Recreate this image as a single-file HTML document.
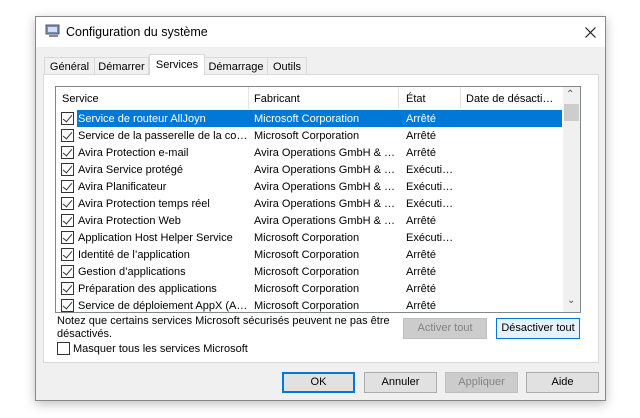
<!DOCTYPE html><html><head><meta charset="utf-8"><style>
*{margin:0;padding:0;box-sizing:border-box}
body{width:640px;height:418px;background:#fff;font-family:"Liberation Sans",sans-serif;font-size:11px;color:#000;position:relative;overflow:hidden}
.a{position:absolute}
.win{left:35px;top:16px;width:571px;height:385px;border:1px solid #888;background:#f0f0f0;box-shadow:0 3px 10px rgba(0,0,0,.25)}
.title{left:0;top:0;width:569px;height:30px;background:#fff}
.tab{top:40px;height:18px;border:1px solid #d9d9d9;border-bottom:none;background:#f0f0f0;padding-top:3px;text-align:center;white-space:nowrap}
.panel{left:7px;top:57px;width:556px;height:289px;background:#fff;border:1px solid #d9d9d9}
.list{left:19px;top:69px;width:526px;height:227px;border:1px solid #828790;background:#fff;overflow:hidden}
.row{position:absolute;left:0;height:17px;width:506px;line-height:19px;white-space:nowrap}
.cb{position:absolute;left:5px;top:2px;width:13px;height:13px;border:1px solid #333;background:#fff}
.cb:after{content:"";position:absolute;left:3px;top:0px;width:4px;height:8px;border:solid #333;border-width:0 1.3px 1.3px 0;transform:rotate(40deg)}
.c1{position:absolute;left:22px}.c2{position:absolute;left:198px}.c3{position:absolute;left:350px}
.sel{position:absolute;left:21px;top:0;width:485px;height:17px;background:#0078d7}
.btn{height:21px;border:1px solid #adadad;background:#e1e1e1;text-align:center;line-height:19px}
</style></head><body>
<div class="a win">
 <div class="a title">
  <svg class="a" style="left:9px;top:6px" width="16" height="16" viewBox="0 0 16 16"><rect x="1" y="2" width="13" height="9" fill="#7a8fb0" stroke="#556"/><rect x="3" y="4" width="9" height="5" fill="#cfe0f5"/><rect x="4" y="12" width="9" height="2" fill="#889"/></svg>
  <div class="a" style="left:30px;top:8px;font-size:12.5px">Configuration du système</div>
  <svg class="a" style="left:549px;top:10px" width="11" height="11" viewBox="0 0 11 11"><path d="M0.5 0.5L10.5 10.5M10.5 0.5L0.5 10.5" stroke="#111" stroke-width="1.1"/></svg>
 </div>
 <div class="a tab" style="left:8px;width:51px">Général</div>
 <div class="a tab" style="left:58px;width:55px">Démarrer</div>
 <div class="a tab" style="left:168px;width:64px">Démarrage</div>
 <div class="a tab" style="left:231px;width:40px">Outils</div>
 <div class="a panel"></div>
 <div class="a tab" style="left:113px;width:56px;top:37px;height:21px;background:#fff;padding-top:4px;z-index:2">Services</div>
 <div class="a list">
  <div class="a" style="left:0;top:0;width:506px;height:22px;line-height:24px">
   <span class="a" style="left:6px">Service</span><span class="a" style="left:198px">Fabricant</span><span class="a" style="left:350px">État</span><span class="a" style="left:410px">Date de désacti…</span>
   <div class="a" style="left:192px;top:0;width:1px;height:22px;background:#e5e5e5"></div>
   <div class="a" style="left:342px;top:0;width:1px;height:22px;background:#e5e5e5"></div>
   <div class="a" style="left:404px;top:0;width:1px;height:22px;background:#e5e5e5"></div>
  </div>
  <div class="a" style="left:507px;top:0;width:17px;height:225px;background:#f0f0f0">
   <div class="a" style="left:3px;top:2px;font-size:10px;color:#555">⌃</div>
   <div class="a" style="left:1px;top:17px;width:15px;height:17px;background:#cdcdcd"></div>
   <div class="a" style="left:4px;top:208px;font-size:10px;color:#555">⌄</div>
  </div>
  <div class="row" style="top:23px"><div class="sel"></div><div class="cb"></div><span class="c1" style="color:#fff">Service de routeur AllJoyn</span><span class="c2" style="color:#fff">Microsoft Corporation</span><span class="c3" style="color:#fff">Arrêté</span></div>
  <div class="row" style="top:40px"><div class="cb"></div><span class="c1">Service de la passerelle de la co…</span><span class="c2">Microsoft Corporation</span><span class="c3">Arrêté</span></div>
  <div class="row" style="top:57px"><div class="cb"></div><span class="c1">Avira Protection e-mail</span><span class="c2">Avira Operations GmbH &amp; …</span><span class="c3">Arrêté</span></div>
  <div class="row" style="top:74px"><div class="cb"></div><span class="c1">Avira Service protégé</span><span class="c2">Avira Operations GmbH &amp; …</span><span class="c3">Exécuti…</span></div>
  <div class="row" style="top:91px"><div class="cb"></div><span class="c1">Avira Planificateur</span><span class="c2">Avira Operations GmbH &amp; …</span><span class="c3">Exécuti…</span></div>
  <div class="row" style="top:108px"><div class="cb"></div><span class="c1">Avira Protection temps réel</span><span class="c2">Avira Operations GmbH &amp; …</span><span class="c3">Exécuti…</span></div>
  <div class="row" style="top:125px"><div class="cb"></div><span class="c1">Avira Protection Web</span><span class="c2">Avira Operations GmbH &amp; …</span><span class="c3">Arrêté</span></div>
  <div class="row" style="top:142px"><div class="cb"></div><span class="c1">Application Host Helper Service</span><span class="c2">Microsoft Corporation</span><span class="c3">Exécuti…</span></div>
  <div class="row" style="top:159px"><div class="cb"></div><span class="c1">Identité de l’application</span><span class="c2">Microsoft Corporation</span><span class="c3">Arrêté</span></div>
  <div class="row" style="top:176px"><div class="cb"></div><span class="c1">Gestion d’applications</span><span class="c2">Microsoft Corporation</span><span class="c3">Arrêté</span></div>
  <div class="row" style="top:193px"><div class="cb"></div><span class="c1">Préparation des applications</span><span class="c2">Microsoft Corporation</span><span class="c3">Arrêté</span></div>
  <div class="row" style="top:210px"><div class="cb"></div><span class="c1">Service de déploiement AppX (A…</span><span class="c2">Microsoft Corporation</span><span class="c3">Arrêté</span></div>
 </div>
 <div class="a" style="left:21px;top:298px;line-height:13px">Notez que certains services Microsoft sécurisés peuvent ne pas être<br>désactivés.</div>
 <div class="a" style="left:21px;top:325px;width:13px;height:13px;border:1px solid #333;background:#fff"></div>
 <div class="a" style="left:37px;top:326px">Masquer tous les services Microsoft</div>
 <div class="a btn" style="left:367px;top:301px;width:84px;background:#ccc;border-color:#bfbfbf;color:#838383">Activer tout</div>
 <div class="a btn" style="left:460px;top:301px;width:84px;border-color:#0078d7;background:#e5f1fb">Désactiver tout</div>
 <div class="a btn" style="left:246px;top:355px;width:73px;border:2px solid #0078d7;line-height:17px">OK</div>
 <div class="a btn" style="left:328px;top:355px;width:73px">Annuler</div>
 <div class="a btn" style="left:409px;top:355px;width:73px;background:#ccc;border-color:#bfbfbf;color:#838383">Appliquer</div>
 <div class="a btn" style="left:490px;top:355px;width:73px">Aide</div>
</div>
</body></html>
